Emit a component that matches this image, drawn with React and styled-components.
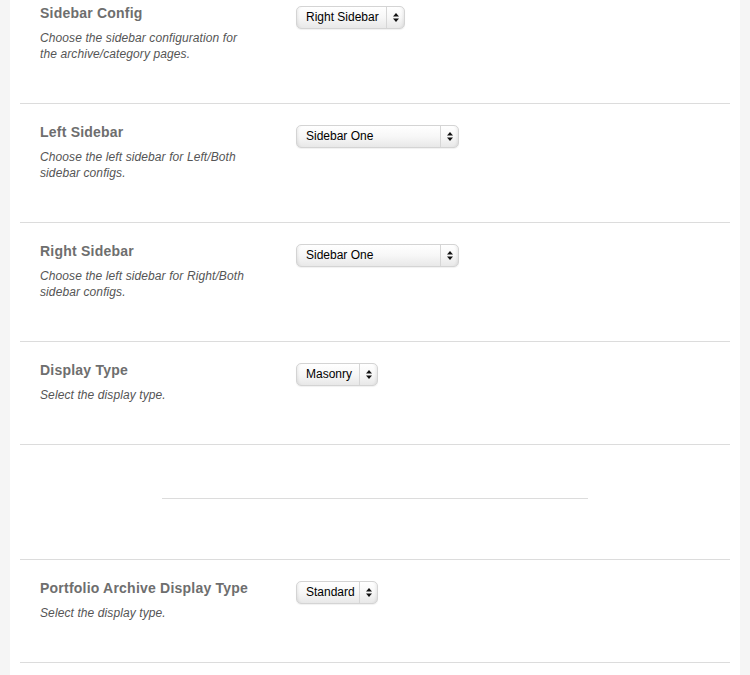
import React from "react";
import styled, { createGlobalStyle } from "styled-components";

const GlobalStyle = createGlobalStyle`
  html, body {
    margin: 0;
    padding: 0;
    background: #f5f5f5;
  }
  body {
    font-family: "Liberation Sans", Arial, Helvetica, sans-serif;
    overflow: hidden;
  }
`;

const options = [
  {
    title: "Sidebar Config",
    desc: "Choose the sidebar configuration for the archive/category pages.",
    value: "Right Sidebar",
    width: 109,
  },
  {
    title: "Left Sidebar",
    desc: "Choose the left sidebar for Left/Both sidebar configs.",
    value: "Sidebar One",
    width: 163,
  },
  {
    title: "Right Sidebar",
    desc: "Choose the left sidebar for Right/Both sidebar configs.",
    value: "Sidebar One",
    width: 163,
  },
  {
    title: "Display Type",
    desc: "Select the display type.",
    value: "Masonry",
    width: 82,
  },
  { divider: true },
  {
    title: "Portfolio Archive Display Type",
    desc: "Select the display type.",
    value: "Standard",
    width: 82,
  },
];

const SelectArrows = () => (
  <svg width="6" height="9" viewBox="0 0 6 9">
    <path d="M3 0 L6 3.5 L0 3.5 Z" fill="#111" />
    <path d="M0 5.5 L6 5.5 L3 9 Z" fill="#111" />
  </svg>
);

const Select = ({ value, width }) => (
  <SelectBox $width={width}>
    <SelectLabel>{value}</SelectLabel>
    <SelectCap>
      <SelectArrows />
    </SelectCap>
  </SelectBox>
);

const App = () => {
  return (
    <>
      <GlobalStyle />
      <Panel>
        <List>
          {options.map((opt, i) =>
            opt.divider ? (
              <SpacerRow key={i}>
                <Rule />
              </SpacerRow>
            ) : (
              <Row key={i}>
                <Info>
                  <Title>{opt.title}</Title>
                  <Desc>{opt.desc}</Desc>
                </Info>
                <Field>
                  <Select value={opt.value} width={opt.width} />
                </Field>
              </Row>
            )
          )}
        </List>
      </Panel>
    </>
  );
};

const Panel = styled.div`
  margin: 0 10px;
  min-height: 100vh;
  background: #fff;
  overflow: hidden;
`;

const List = styled.div`
  margin-top: -15px;
`;

const Row = styled.div`
  display: grid;
  grid-template-columns: 256px 1fr;
  margin: 0 10px;
  padding: 19px 20px 41px;
  border-bottom: 1px solid #dcdcdc;
`;

const SpacerRow = styled.div`
  margin: 0 10px;
  padding: 53px 0 60px;
  border-bottom: 1px solid #dcdcdc;
`;

const Rule = styled.div`
  width: 60%;
  height: 1px;
  margin: 0 auto;
  background: #dcdcdc;
`;

const Info = styled.div`
  max-width: 214px;
`;

const Title = styled.h3`
  margin: 0 0 8px;
  font-size: 14px;
  line-height: 18px;
  font-weight: bold;
  letter-spacing: 0.22px;
  color: #6e6e6e;
`;

const Desc = styled.p`
  margin: 0;
  font-size: 12px;
  line-height: 16px;
  font-style: italic;
  letter-spacing: 0.1px;
  color: #555;
`;

const Field = styled.div`
  padding-top: 2px;
`;

const SelectBox = styled.div`
  display: flex;
  box-sizing: border-box;
  width: ${({ $width }) => $width}px;
  height: 23px;
  border: 1px solid #d4d4d4;
  border-radius: 5px;
  background: linear-gradient(#ffffff 0%, #f7f7f7 50%, #e8e8e8 100%);
  box-shadow: inset 3px 0 3px -2px rgba(0, 0, 0, 0.08),
    inset -3px 0 3px -2px rgba(0, 0, 0, 0.08), 0 1px 1px rgba(0, 0, 0, 0.06);
  font-size: 12px;
  color: #000;
`;

const SelectLabel = styled.span`
  flex: 1;
  padding-left: 9px;
  line-height: 21px;
  white-space: nowrap;
`;

const SelectCap = styled.span`
  width: 17px;
  display: flex;
  align-items: center;
  justify-content: center;
  border-left: 1px solid #d6d6d6;
`;

export default App;
